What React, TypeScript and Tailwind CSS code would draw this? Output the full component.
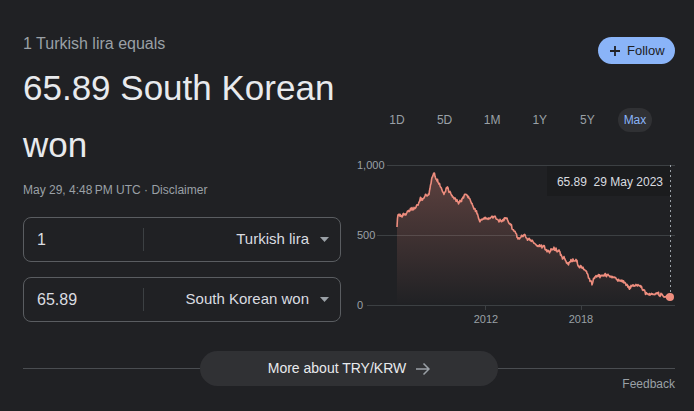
import React from "react";

function mulberry32(a: number) {
  return function () {
    let t = (a += 0x6d2b79f5);
    t = Math.imul(t ^ (t >>> 15), t | 1);
    t ^= t + Math.imul(t ^ (t >>> 7), t | 61);
    return ((t ^ (t >>> 14)) >>> 0) / 4294967296;
  };
}

const OX = 347;
const OY = 150;

const KEY: [number, number][] = [
  [397, 227], [398, 214], [402, 217], [408, 212], [414, 208], [420, 200], [425, 196],
  [429, 193], [432, 180], [434, 173], [436, 178], [439, 183], [442, 190], [444, 193],
  [447, 187], [450, 192], [454, 198], [460, 202], [465, 195], [468, 196], [470, 200],
  [475, 210], [480, 220], [487, 218], [494, 217], [500, 220], [504, 220], [507, 219],
  [512, 228], [517, 237], [525, 236], [532, 240], [539, 247], [544, 247], [547, 252],
  [554, 248], [560, 253], [567, 263], [575, 260], [580, 267], [587, 272], [590, 280],
  [592, 283], [595, 277], [604, 276], [610, 275], [620, 280], [630, 287], [635, 285],
  [640, 286], [647, 293], [657, 295], [670, 297],
];

function buildPoints(): [number, number][] {
  const rnd = mulberry32(7);
  const pts: [number, number][] = [];
  let walk = 0;
  for (let i = 0; i < KEY.length - 1; i++) {
    const [x0, y0] = KEY[i];
    const [x1, y1] = KEY[i + 1];
    const steps = Math.max(1, Math.round((x1 - x0) * 2));
    for (let s = 0; s < steps; s++) {
      const t = s / steps;
      const x = x0 + (x1 - x0) * t;
      let y = y0 + (y1 - y0) * t;
      if (!(i === 0 && s === 0)) {
        walk = walk * 0.6 + (rnd() - 0.5) * 2.6;
        y += walk + (rnd() - 0.5) * 2.2;
      }
      pts.push([x - OX, y - OY]);
    }
  }
  const last = KEY[KEY.length - 1];
  pts.push([last[0] - OX, last[1] - OY]);
  return pts;
}

const PTS = buildPoints();
const LINE = PTS.map((p, i) => `${i === 0 ? "M" : "L"}${p[0].toFixed(2)} ${p[1].toFixed(2)}`).join(" ");
const AREA = `${LINE} L${(670 - OX).toFixed(2)} 155 L${(397 - OX).toFixed(2)} 155 Z`;

function Chart() {
  const lbl = "#9aa0a6";
  const grid = "#3c4043";
  return (
    <svg width={347} height={180} viewBox="0 0 347 180" className="block">
      <defs>
        <linearGradient id="areaFill" x1="0" y1="20" x2="0" y2="155" gradientUnits="userSpaceOnUse">
          <stop offset="0" stopColor="#ee8d7e" stopOpacity="0.3" />
          <stop offset="1" stopColor="#ee8d7e" stopOpacity="0" />
        </linearGradient>
      </defs>
      <rect x={200} y={16} width={123} height={30} fill="#1b1c1e" />
      <line x1={40} y1={15.5} x2={328} y2={15.5} stroke={grid} strokeWidth={1} />
      <line x1={30} y1={85.5} x2={328} y2={85.5} stroke={grid} strokeWidth={1} />
      <line x1={20} y1={155.5} x2={328} y2={155.5} stroke={grid} strokeWidth={1} />
      <line x1={138.5} y1={155} x2={138.5} y2={160} stroke={grid} strokeWidth={1} />
      <line x1={234.5} y1={155} x2={234.5} y2={160} stroke={grid} strokeWidth={1} />
      <g fill={lbl} fontSize={11} fontFamily="'Liberation Sans', Arial, sans-serif">
        <text x={10} y={19}>1,000</text>
        <text x={10} y={89}>500</text>
        <text x={10} y={159}>0</text>
        <text x={139} y={173} textAnchor="middle">2012</text>
        <text x={234} y={173} textAnchor="middle">2018</text>
      </g>
      <path d={AREA} fill="url(#areaFill)" />
      <path d={LINE} fill="none" stroke="#ee8d7e" strokeWidth={1.6} strokeLinejoin="round" />
      <line x1={323.5} y1={15} x2={323.5} y2={145} stroke="#9aa0a6" strokeWidth={1} strokeDasharray="2 3" />
      <circle cx={323} cy={147} r={4} fill="#ee8d7e" />
      <text x={316} y={36} textAnchor="end" fill="#dadce0" fontSize={12} fontFamily="'Liberation Sans', Arial, sans-serif" xmlSpace="preserve">
        65.89  29 May 2023
      </text>
    </svg>
  );
}

function Triangle() {
  return (
    <svg width={9} height={5} viewBox="0 0 9 5" className="block">
      <path d="M0 0 L9 0 L4.5 5 Z" fill="#9aa0a6" />
    </svg>
  );
}

function CurrencyBox({ value, name }: { value: string; name: string }) {
  return (
    <div className="h-[45px] w-[318px] rounded-[8px] border border-[#5a5d61] flex items-center">
      <div className="w-[119px] pl-[13px] flex items-center">
        <span className="text-[16px] text-[#dadce0]">{value}</span>
      </div>
      <div className="w-px h-[23px] bg-[#3c4043]" />
      <div className="flex-1 flex items-center justify-end pr-[11px] gap-[11px]">
        <span className="text-[15px] text-[#dadce0]">{name}</span>
        <Triangle />
      </div>
    </div>
  );
}

export default function App() {
  const tabs = ["1D", "5D", "1M", "1Y", "5Y", "Max"];
  return (
    <div className="w-[694px] h-[411px] bg-[#202124] flex flex-col overflow-hidden font-['Liberation_Sans',Arial,sans-serif]">
      <div className="flex h-[330px]">
        <div className="w-[347px] pl-[23px] flex flex-col">
          <div className="pt-[34px] text-[16px] leading-[20px] text-[#9aa0a6]">1 Turkish lira equals</div>
          <div className="mt-[5px] text-[35px] leading-[57px] text-[#e8eaed]">
            65.89 South Korean
            <br />
            won
          </div>
          <div className="mt-[9px] text-[12px] leading-[16px] text-[#9aa0a6]">
            May 29, 4:48&#8239;PM UTC · <span>Disclaimer</span>
          </div>
          <div className="mt-[19px]">
            <CurrencyBox value="1" name="Turkish lira" />
          </div>
          <div className="mt-[15px]">
            <CurrencyBox value="65.89" name="South Korean won" />
          </div>
        </div>
        <div className="flex-1 flex flex-col">
          <div className="flex justify-end pt-[37px] pr-[19px]">
            <button className="h-[27px] w-[77px] rounded-full bg-[#8ab4f8] flex items-center pl-[12px] gap-[7px] text-[#202124] text-[13px]">
              <svg width={10} height={10} viewBox="0 0 10 10" className="block">
                <path d="M5 0 V10 M0 5 H10" stroke="#202124" strokeWidth={1.8} />
              </svg>
              <span>Follow</span>
            </button>
          </div>
          <div className="flex mt-[44px] ml-[33px] gap-[13.6px]">
            {tabs.map((t) => (
              <div
                key={t}
                className={
                  t === "Max"
                    ? "w-[34px] h-[24px] rounded-full flex items-center justify-center text-[12px] bg-[#303134] text-[#8ab4f8]"
                    : "w-[34px] h-[24px] rounded-full flex items-center justify-center text-[12px] text-[#9aa0a6]"
                }
              >
                {t}
              </div>
            ))}
          </div>
          <div className="mt-[18px]">
            <Chart />
          </div>
        </div>
      </div>
      <div className="flex items-center mt-[21px] pl-[23px] pr-[19px]">
        <div className="flex-1 h-px bg-[#4a4d51]" />
        <button className="w-[298px] h-[35px] rounded-full bg-[#303134] flex items-center justify-center gap-[10px] text-[14px] text-[#e8eaed]">
          <span>More about TRY/KRW</span>
          <svg width={14} height={12} viewBox="0 0 14 12" className="block">
            <path d="M0 6 H13 M7.5 0.5 L13 6 L7.5 11.5" fill="none" stroke="#9aa0a6" strokeWidth={1.5} />
          </svg>
        </button>
        <div className="flex-1 h-px bg-[#4a4d51]" />
      </div>
      <div className="flex justify-end pr-[19px] -mt-[10px] text-[12px] leading-[16px] text-[#9aa0a6]">Feedback</div>
    </div>
  );
}
